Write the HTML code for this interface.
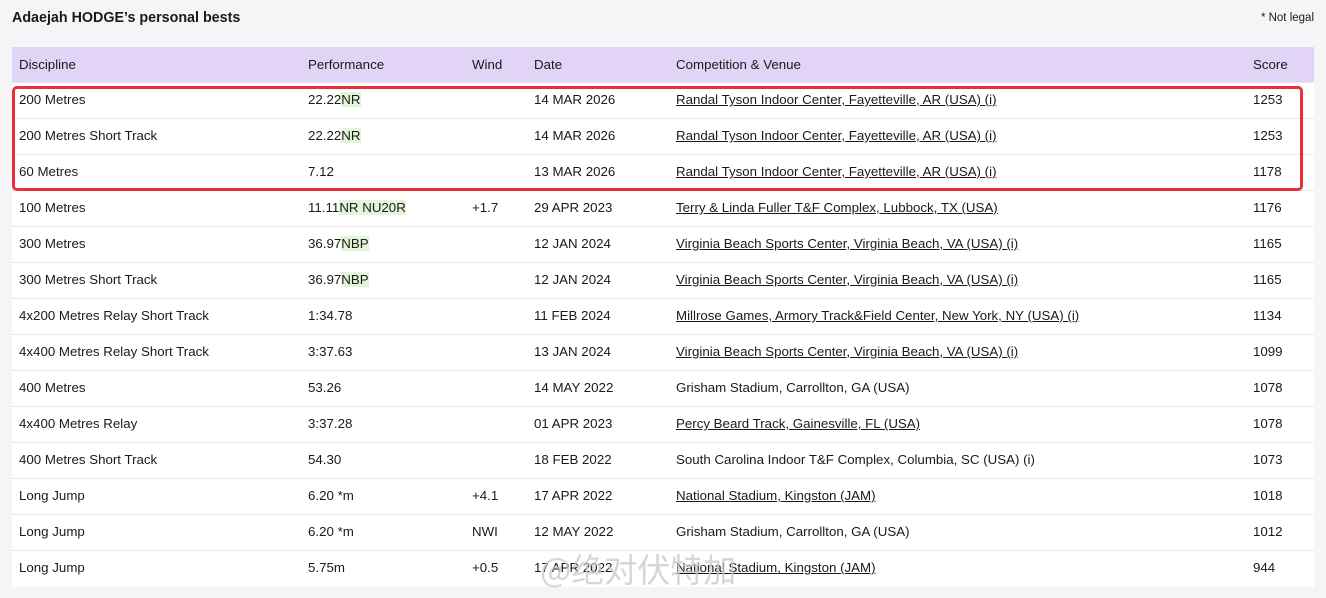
<!DOCTYPE html>
<html><head><meta charset="utf-8"><style>
body{margin:0;background:#f5f5f7;font-family:"Liberation Sans",Arial,sans-serif;color:#1a1a1a;width:1326px;height:598px;overflow:hidden;position:relative}
h1{position:absolute;left:12px;top:10px;margin:0;font-size:14.3px;font-weight:bold}
.nl{position:absolute;right:12px;top:12px;font-size:11.5px}
table{position:absolute;left:12px;top:47px;width:1302px;border-collapse:collapse;font-size:13.3px;background:#fff}
th{background:#e1d4f7;font-weight:normal;text-align:left;height:35px;padding:0}
td{height:36px;padding:0 0 2px 0;border-top:1px solid #e8e8ec;box-sizing:border-box}
th:first-child,td:first-child{padding-left:7px}
u{text-decoration:underline}
.g{background:#e2f5d8}
.box{position:absolute;left:12px;top:86px;width:1285px;height:99px;border:3px solid #e8303a;border-radius:5px}
.wm{position:absolute;left:540px;top:548px;font-size:33px;color:rgba(200,200,200,.75);font-family:"Noto Sans CJK SC",sans-serif;line-height:40px}
</style></head><body>
<h1>Adaejah HODGE’s personal bests</h1>
<div class="nl">* Not legal</div>
<table>
<colgroup><col style="width:296px"><col style="width:164px"><col style="width:62px"><col style="width:142px"><col style="width:577px"><col></colgroup>
<tr><th>Discipline</th><th>Performance</th><th>Wind</th><th>Date</th><th>Competition &amp; Venue</th><th>Score</th></tr>
<tr><td>200 Metres</td><td>22.22<span class="g">NR</span></td><td></td><td>14 MAR 2026</td><td><u>Randal Tyson Indoor Center, Fayetteville, AR (USA) (i)</u></td><td>1253</td></tr>
<tr><td>200 Metres Short Track</td><td>22.22<span class="g">NR</span></td><td></td><td>14 MAR 2026</td><td><u>Randal Tyson Indoor Center, Fayetteville, AR (USA) (i)</u></td><td>1253</td></tr>
<tr><td>60 Metres</td><td>7.12</td><td></td><td>13 MAR 2026</td><td><u>Randal Tyson Indoor Center, Fayetteville, AR (USA) (i)</u></td><td>1178</td></tr>
<tr><td>100 Metres</td><td>11.11<span class="g">NR NU20R</span></td><td>+1.7</td><td>29 APR 2023</td><td><u>Terry &amp; Linda Fuller T&amp;F Complex, Lubbock, TX (USA)</u></td><td>1176</td></tr>
<tr><td>300 Metres</td><td>36.97<span class="g">NBP</span></td><td></td><td>12 JAN 2024</td><td><u>Virginia Beach Sports Center, Virginia Beach, VA (USA) (i)</u></td><td>1165</td></tr>
<tr><td>300 Metres Short Track</td><td>36.97<span class="g">NBP</span></td><td></td><td>12 JAN 2024</td><td><u>Virginia Beach Sports Center, Virginia Beach, VA (USA) (i)</u></td><td>1165</td></tr>
<tr><td>4x200 Metres Relay Short Track</td><td>1:34.78</td><td></td><td>11 FEB 2024</td><td><u>Millrose Games, Armory Track&amp;Field Center, New York, NY (USA) (i)</u></td><td>1134</td></tr>
<tr><td>4x400 Metres Relay Short Track</td><td>3:37.63</td><td></td><td>13 JAN 2024</td><td><u>Virginia Beach Sports Center, Virginia Beach, VA (USA) (i)</u></td><td>1099</td></tr>
<tr><td>400 Metres</td><td>53.26</td><td></td><td>14 MAY 2022</td><td>Grisham Stadium, Carrollton, GA (USA)</td><td>1078</td></tr>
<tr><td>4x400 Metres Relay</td><td>3:37.28</td><td></td><td>01 APR 2023</td><td><u>Percy Beard Track, Gainesville, FL (USA)</u></td><td>1078</td></tr>
<tr><td>400 Metres Short Track</td><td>54.30</td><td></td><td>18 FEB 2022</td><td>South Carolina Indoor T&amp;F Complex, Columbia, SC (USA) (i)</td><td>1073</td></tr>
<tr><td>Long Jump</td><td>6.20 *m</td><td>+4.1</td><td>17 APR 2022</td><td><u>National Stadium, Kingston (JAM)</u></td><td>1018</td></tr>
<tr><td>Long Jump</td><td>6.20 *m</td><td>NWI</td><td>12 MAY 2022</td><td>Grisham Stadium, Carrollton, GA (USA)</td><td>1012</td></tr>
<tr><td>Long Jump</td><td>5.75m</td><td>+0.5</td><td>17 APR 2022</td><td><u>National Stadium, Kingston (JAM)</u></td><td>944</td></tr>
</table>
<div class="box"></div>
<div class="wm">@绝对伏特加</div>
</body></html>
